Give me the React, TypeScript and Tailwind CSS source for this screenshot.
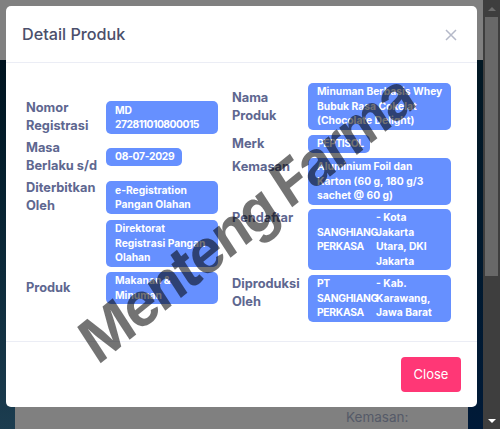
const lbl = "text-[#5e6790] font-bold text-[12.8px] leading-[18px] whitespace-nowrap";
const val = "bg-[#6690ff] text-white font-bold text-[10.3px] leading-[14.5px] rounded-[5px] px-[9px] whitespace-nowrap";

function Chip({ children, className = "" }: { children: React.ReactNode; className?: string }) {
  return <div className={`${val} ${className}`}>{children}</div>;
}

export default function App() {
  return (
    <div className="relative h-[429px] w-[500px] overflow-hidden bg-[#808080] font-['Inter','Noto_Sans',sans-serif]">
      {/* page behind the overlay */}
      <div className="absolute left-0 top-[60px] flex h-[369px] w-[483px]">
        <div className="h-full w-[15px] bg-gradient-to-b from-[#00131f] to-[#1c3d50]" />
        <div className="relative flex-1">
          <div className="absolute bottom-0 left-0 h-[21px] w-full overflow-hidden bg-[#808080] pl-[331px] text-[13.5px] leading-[19px] text-[#555a68]">
            <div>Kemasan:</div>
            <div>Aluminium</div>
          </div>
        </div>
        <div className="h-full w-[15px] bg-gradient-to-b from-[#021824] to-[#001a38]" />
      </div>

      {/* scrollbar */}
      <div className="absolute right-0 top-0 flex h-[429px] w-[17px] flex-col bg-[#3e3e3e]">
        <div className="flex h-[17px] items-center justify-center">
          <div className="h-0 w-0 border-x-[4px] border-b-[4px] border-x-transparent border-b-[#6d6d6d]" />
        </div>
        <div className="ml-[2px] h-[259px] w-[13px] bg-[#686868]" />
        <div className="mt-auto flex h-[17px] items-center justify-center">
          <div className="h-0 w-0 border-x-[4px] border-t-[4px] border-x-transparent border-t-white" />
        </div>
      </div>

      {/* modal */}
      <div className="absolute left-[6px] top-[6px] flex h-[401px] w-[471px] flex-col rounded-[5px] bg-white">
        <div className="flex h-[57px] items-center justify-between border-b border-[#ebedf5] pl-[16px] pr-[20px]">
          <span className="text-[16.2px] font-medium text-[#4b4f6b]">Detail Produk</span>
          <svg width="12" height="12" viewBox="0 0 12 12" className="mt-[2px]">
            <path d="M1 1 L11 11 M11 1 L1 11" stroke="#b5b9c9" strokeWidth="1.5" />
          </svg>
        </div>

        <div className="flex h-[278px] pl-[20px] pt-[20px]">
          {/* left column */}
          <div className="flex w-[192px] flex-col pt-[16px]">
            <div className="flex h-[36px] items-center">
              <div className={`${lbl} w-[80px]`}>Nomor<br />Registrasi</div>
              <Chip className="h-[33px] w-[112px] pt-[2px]">MD<br /><span className="tracking-[-0.5px]">272811010800015</span></Chip>
            </div>
            <div className="mt-[4px] flex h-[36px] items-center">
              <div className={`${lbl} w-[80px]`}>Masa<br />Berlaku s/d</div>
              <Chip className="h-[18px] w-[76px] pt-[1px]"><span className="tracking-[-0.3px]">08-07-2029</span></Chip>
            </div>
            <div className="mt-[4px] flex h-[36px] items-center">
              <div className={`${lbl} w-[80px]`}>Diterbitkan<br />Oleh</div>
              <Chip className="h-[33px] w-[112px] pt-[2px]">e-Registration<br />Pangan Olahan</Chip>
            </div>
            <div className="mt-[5px] flex">
              <div className="w-[80px]" />
              <Chip className="h-[47px] w-[112px] pt-[1px]">Direktorat<br />Registrasi Pangan<br />Olahan</Chip>
            </div>
            <div className="mt-[5px] flex items-center">
              <div className={`${lbl} w-[80px]`}>Produk</div>
              <Chip className="h-[32px] w-[112px] pt-[1px]">Makanan &amp;<br />Minuman</Chip>
            </div>
          </div>

          {/* right column */}
          <div className="ml-[14px] flex w-[219px] flex-col">
            <div className="flex items-center">
              <div className={`${lbl} w-[76px]`}>Nama<br />Produk</div>
              <Chip className="h-[47px] w-[143px] pt-[1px]">Minuman Berbasis Whey<br />Bubuk Rasa Cokelat<br />(Chocolate Delight)</Chip>
            </div>
            <div className="mt-[5px] flex items-center">
              <div className={`${lbl} w-[76px]`}>Merk</div>
              <Chip className="h-[18px] w-[62px] pt-[1px]"><span className="tracking-[-0.4px]">PEPTISOL</span></Chip>
            </div>
            <div className="mt-[5px] flex">
              <div className={`${lbl} w-[76px]`}>Kemasan</div>
              <Chip className="h-[47px] w-[143px] pt-[1px]">Aluminium Foil dan<br />Karton (60 g, 180 g/3<br />sachet @ 60 g)</Chip>
            </div>
            <div className="mt-[4px] flex">
              <div className={`${lbl} w-[76px]`}>Pendaftar</div>
              <Chip className="flex h-[61px] w-[143px] pt-[1px]">
                <span className="w-[59px] shrink-0 pt-[14.5px] tracking-[-0.3px]">SANGHIANG<br />PERKASA</span>
                <span>- Kota<br />Jakarta<br />Utara, DKI<br />Jakarta</span>
              </Chip>
            </div>
            <div className="mt-[5px] flex">
              <div className={`${lbl} w-[76px]`}>Diproduksi<br />Oleh</div>
              <Chip className="flex h-[47px] w-[143px] pt-[1px]">
                <span className="w-[59px] shrink-0 tracking-[-0.3px]">PT<br />SANGHIANG<br />PERKASA</span>
                <span>- Kab.<br />Karawang,<br />Jawa Barat</span>
              </Chip>
            </div>
          </div>
        </div>

        <div className="flex flex-1 items-center justify-end border-t border-[#ebedf5] pr-[16px]">
          <div className="flex h-[35px] w-[60px] items-center justify-center rounded-[4px] bg-[#ff3776] text-[13px] text-white">Close</div>
        </div>
      </div>

      {/* watermark */}
      <div className="pointer-events-none absolute left-[246px] top-[218px] [transform:translate(-50%,-50%)_scaleY(1.12)_rotate(-36deg)] whitespace-nowrap text-[55px] font-bold leading-none tracking-[-2px] text-black/55">
        Menteng Farma
      </div>
    </div>
  );
}
